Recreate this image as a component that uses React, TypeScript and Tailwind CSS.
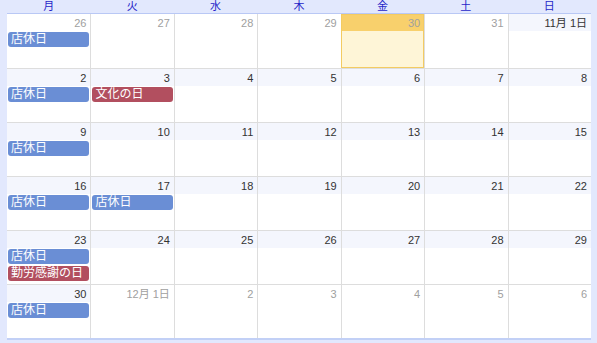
import React from "react";

type Ev = { label: string; color: "blue" | "red" };
type Day = { label: string; inMonth: boolean; today?: boolean; events?: Ev[] };

const heads = ["月", "火", "水", "木", "金", "土", "日"];

const closed: Ev = { label: "店休日", color: "blue" };

const weeks: Day[][] = [
    [
        { label: "26", inMonth: false, events: [closed] },
        { label: "27", inMonth: false },
        { label: "28", inMonth: false },
        { label: "29", inMonth: false },
        { label: "30", inMonth: false, today: true },
        { label: "31", inMonth: false },
        { label: "11月 1日", inMonth: true },
    ],
    [
        { label: "2", inMonth: true, events: [closed] },
        { label: "3", inMonth: true, events: [{ label: "文化の日", color: "red" }] },
        { label: "4", inMonth: true },
        { label: "5", inMonth: true },
        { label: "6", inMonth: true },
        { label: "7", inMonth: true },
        { label: "8", inMonth: true },
    ],
    [
        { label: "9", inMonth: true, events: [closed] },
        { label: "10", inMonth: true },
        { label: "11", inMonth: true },
        { label: "12", inMonth: true },
        { label: "13", inMonth: true },
        { label: "14", inMonth: true },
        { label: "15", inMonth: true },
    ],
    [
        { label: "16", inMonth: true, events: [closed] },
        { label: "17", inMonth: true, events: [closed] },
        { label: "18", inMonth: true },
        { label: "19", inMonth: true },
        { label: "20", inMonth: true },
        { label: "21", inMonth: true },
        { label: "22", inMonth: true },
    ],
    [
        { label: "23", inMonth: true, events: [closed, { label: "勤労感謝の日", color: "red" }] },
        { label: "24", inMonth: true },
        { label: "25", inMonth: true },
        { label: "26", inMonth: true },
        { label: "27", inMonth: true },
        { label: "28", inMonth: true },
        { label: "29", inMonth: true },
    ],
    [
        { label: "30", inMonth: true, events: [closed] },
        { label: "12月 1日", inMonth: false },
        { label: "2", inMonth: false },
        { label: "3", inMonth: false },
        { label: "4", inMonth: false },
        { label: "5", inMonth: false },
        { label: "6", inMonth: false },
    ],
];

function Cell({ day, first }: { day: Day; first: boolean }) {
    const stripBg = day.today ? "bg-[#f8d06c]" : day.inMonth ? "bg-[#f4f6fd]" : "bg-white";
    const numColor = day.inMonth ? "text-[#333333]" : "text-[#a0a0a0]";
    return (
        <div
            className={
                "flex flex-col h-full " +
                (first ? "" : "border-l border-[#dddddd] ") +
                (day.today ? "bg-[#fef5d7] outline outline-1 outline-[#f3cb62] -outline-offset-1" : "bg-white")
            }
        >
            <div className={"h-[17px] pr-[4px] pt-[1px] text-right text-[11px] leading-[16px] " + stripBg + " " + numColor}>
                {day.label}
            </div>
            <div className="flex flex-col gap-[2px] px-[1px] pt-[1px]">
                {day.events?.map((e, i) => (
                    <div
                        key={i}
                        className={
                            "h-[15px] rounded-[3px] pl-[3px] text-[12px] leading-[15px] text-white " +
                            (e.color === "blue" ? "bg-[#6a8ed5]" : "bg-[#b24f5f]")
                        }
                    >
                        {e.label}
                    </div>
                ))}
            </div>
        </div>
    );
}

export default function App() {
    return (
        <div
            className="w-[597px] h-[343px] bg-[#e2e8fd] pl-[7px] pr-[6px]"
            style={{ fontFamily: '"Liberation Sans", Arial, "Noto Sans CJK JP", sans-serif' }}
        >
            <div className="grid grid-cols-7 h-[14px] border-b border-[#b9c8f5]">
                {heads.map((h) => (
                    <div key={h} className="text-center text-[11px] leading-[13px] text-[#2626c8]">
                        {h}
                    </div>
                ))}
            </div>
            <div className="flex flex-col border-b-2 border-[#c2d0f6]">
                {weeks.map((w, r) => (
                    <div
                        key={r}
                        className={"grid grid-cols-7 h-[54px] " + (r === 0 ? "" : "border-t border-[#dddddd]")}
                    >
                        {w.map((d, c) => (
                            <Cell key={c} day={d} first={c === 0} />
                        ))}
                    </div>
                ))}
            </div>
        </div>
    );
}
